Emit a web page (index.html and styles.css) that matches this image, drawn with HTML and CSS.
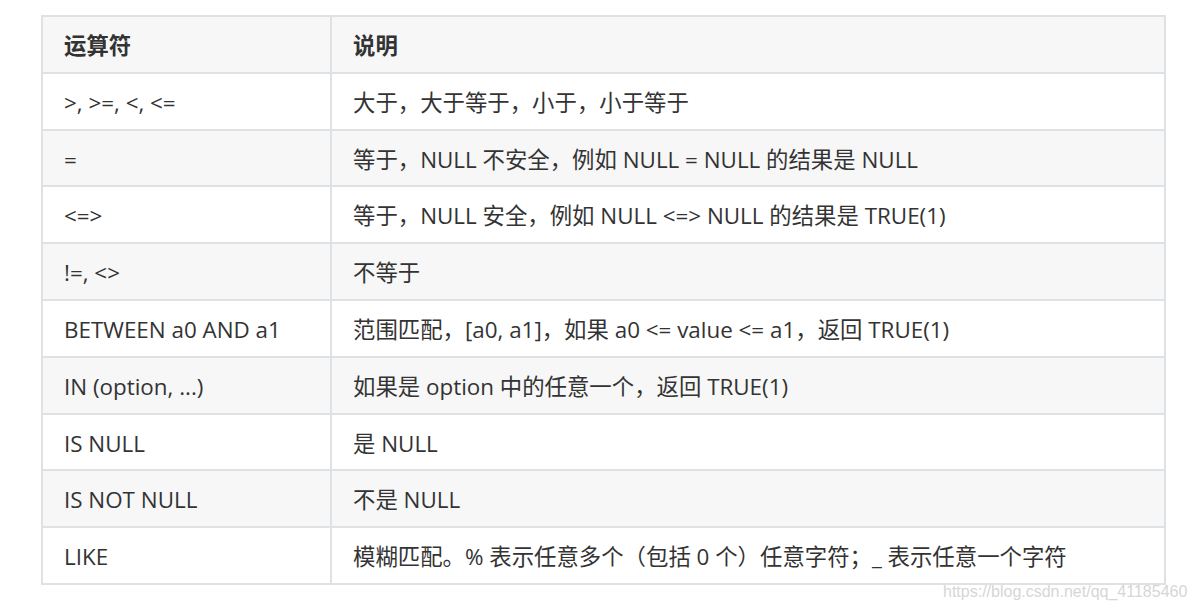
FILE: index.html
```html
<!DOCTYPE html>
<html lang="zh">
<head>
<meta charset="utf-8">
<title>运算符</title>
<link rel="stylesheet" href="styles.css">
</head>
<body>
<div class="page">
  <table class="ops">
    <thead>
      <tr><th class="c1">运算符</th><th>说明</th></tr>
    </thead>
    <tbody>
      <tr><td class="c1">&gt;, &gt;=, &lt;, &lt;=</td><td>大于，大于等于，小于，小于等于</td></tr>
      <tr><td class="c1">=</td><td>等于，NULL 不安全，例如 NULL = NULL 的结果是 NULL</td></tr>
      <tr><td class="c1">&lt;=&gt;</td><td>等于，NULL 安全，例如 NULL &lt;=&gt; NULL 的结果是 TRUE(1)</td></tr>
      <tr><td class="c1">!=, &lt;&gt;</td><td>不等于</td></tr>
      <tr><td class="c1">BETWEEN a0 AND a1</td><td>范围匹配，[a0, a1]，如果 a0 &lt;= value &lt;= a1，返回 TRUE(1)</td></tr>
      <tr><td class="c1">IN (option, ...)</td><td>如果是 option 中的任意一个，返回 TRUE(1)</td></tr>
      <tr><td class="c1">IS NULL</td><td>是 NULL</td></tr>
      <tr><td class="c1">IS NOT NULL</td><td>不是 NULL</td></tr>
      <tr><td class="c1">LIKE</td><td>模糊匹配。% 表示任意多个（包括 0 个）任意字符；_ 表示任意一个字符</td></tr>
    </tbody>
  </table>
  <div class="watermark">https://blog.csdn.net/qq_41185460</div>
</div>
</body>
</html>
```

FILE: styles.css
```css
html, body {
  margin: 0;
  padding: 0;
  background: #ffffff;
}

.page {
  position: relative;
  width: 1196px;
  height: 610px;
  padding: 15px 0 0 41px;
  box-sizing: border-box;
  font-family: "Open Sans", "Noto Sans CJK SC", sans-serif;
  font-size: 22.4px;
  color: #333333;
}

.ops {
  border-collapse: separate;
  border-spacing: 0;
  width: 1125px;
  border-top: 2px solid #dfe2e5;
  border-left: 2px solid #dfe2e5;
  table-layout: fixed;
}

.ops th,
.ops td {
  border-right: 2px solid #dfe2e5;
  border-bottom: 2px solid #dfe2e5;
  padding: 12px 21px 8px 21px;
  line-height: 34.8px;
  text-align: left;
  white-space: nowrap;
}

.ops th {
  font-weight: 700;
  background: #f7f7f7;
}

.ops .c1 {
  width: 289px;
  box-sizing: border-box;
}

.ops tbody tr:nth-child(even) td {
  background: #f7f7f7;
}

.watermark {
  position: absolute;
  left: 943px;
  top: 584px;
  font-family: "Liberation Sans", Arial, sans-serif;
  font-size: 16px;
  line-height: 16px;
  color: #d6d6d6;
  white-space: nowrap;
}
```
